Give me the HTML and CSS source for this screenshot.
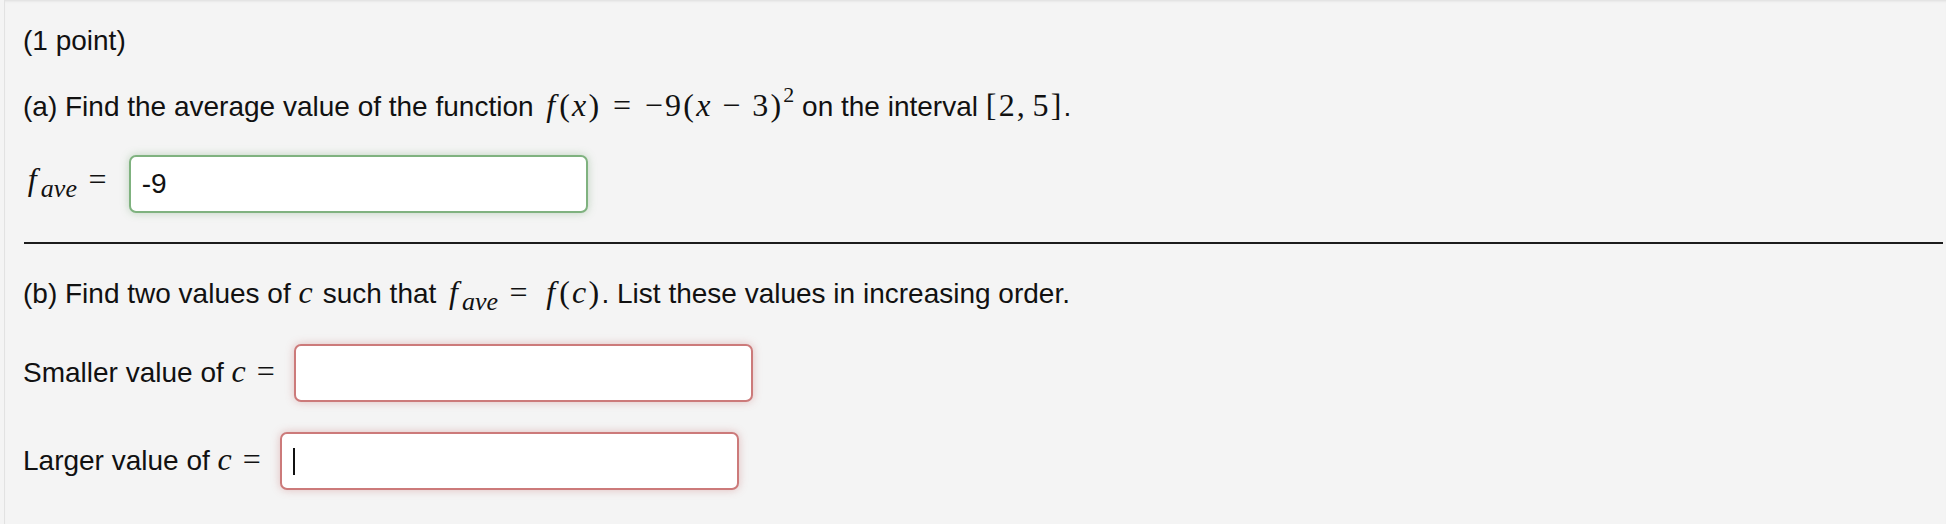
FILE: index.html
```html
<!DOCTYPE html>
<html lang="en">
<head>
<meta charset="utf-8">
<title>Average value problem</title>
<link rel="stylesheet" href="styles.css">
</head>
<body>
<div class="problem">
  <p class="line points">(1 point)</p>
  <p class="line qa">(a) Find the average value of the function <span class="m"><i class="f">f</i>(<i>x</i>)<span class="rel">=</span>−9(<i>x</i><span class="bin">−</span>3)<sup>2</sup></span> on the interval <span class="m">[2,<span class="thin"></span>5]</span>.</p>
  <div class="row r-ave">
    <span class="m"><i class="f">f</i><sub><i>ave</i></sub><span class="rel end">=</span></span>
    <div class="ans ok"><span class="val">-9</span></div>
  </div>
  <hr class="sep">
  <p class="line qb">(b) Find two values of <span class="m"><i>c</i></span> such that <span class="m"><i class="f">f</i><sub><i>ave</i></sub><span class="rel">=</span><i class="f">f</i>(<i>c</i>)</span>. List these values in increasing order.</p>
  <div class="row r-small">
    <span class="lbl">Smaller value of <span class="m"><i>c</i><span class="rel end">=</span></span></span>
    <div class="ans bad"></div>
  </div>
  <div class="row r-large">
    <span class="lbl">Larger value of <span class="m"><i>c</i><span class="rel end">=</span></span></span>
    <div class="ans bad"><span class="caret"></span></div>
  </div>
</div>
</body>
</html>
```

FILE: styles.css
```css
html, body {
  margin: 0;
  padding: 0;
  background: #f4f4f4;
}
body {
  font-family: "Liberation Sans", Arial, sans-serif;
  font-size: 28px;
  color: #111;
}
.problem {
  margin-left: 4px;
  border-left: 1px solid #e2e2e2;
  box-shadow: inset 0 3px 3px -2px rgba(0,0,0,0.10);
  padding: 28px 3px 40px 18px;
  min-height: 456px;
}
.line {
  margin: 0;
  line-height: 26px;
  height: 26px;
  white-space: nowrap;
}
.lbl { white-space: nowrap; line-height: 26px; }
.m {
  font-family: "Liberation Serif", "Times New Roman", serif;
  font-size: 32px;
  line-height: 0;
  letter-spacing: 0.07em;
}
.m i { font-style: italic; }
.m i.f { margin-left: 0.15em; margin-right: 0.06em; }
.rel { margin: 0 0.36em; }
.rel.end { margin-right: 0; }
.lbl .rel.end { margin-left: 0.27em; }
.bin { margin: 0 0.3em; }
.thin { display: inline-block; width: 0.1667em; }
.m sup { font-size: 22px; vertical-align: 14px; line-height: 0; letter-spacing: 0; }
.m sub { font-size: 26px; vertical-align: -7px; line-height: 0; letter-spacing: 0; }
.qa { margin-top: 40px; }
.row {
  display: flex;
  align-items: center;
  gap: 17px;
  height: 58px;
}
.r-ave { margin-top: 35px; gap: 20px; }
.ans {
  box-sizing: border-box;
  height: 58px;
  width: 459px;
  background: #fff;
  border: 2px solid;
  border-radius: 7px;
  display: flex;
  align-items: center;
  padding-left: 11px;
}
.ans.ok {
  border-color: #7fb27f;
  box-shadow: 0 0 8px rgba(90,150,90,0.35);
}
.ans.bad {
  border-color: #cc7a7a;
  box-shadow: 0 0 8px rgba(190,90,90,0.35);
}
.val { font-size: 28px; color: #111; }
.sep {
  margin: 29px 0 0 1px;
  border: 0;
  height: 2px;
  background: #1c1c1c;
}
.qb { margin-top: 37px; }
.r-small { margin-top: 37px; }
.r-large { margin-top: 30px; }
.caret {
  display: block;
  width: 2px;
  height: 27px;
  background: #111;
}
```
